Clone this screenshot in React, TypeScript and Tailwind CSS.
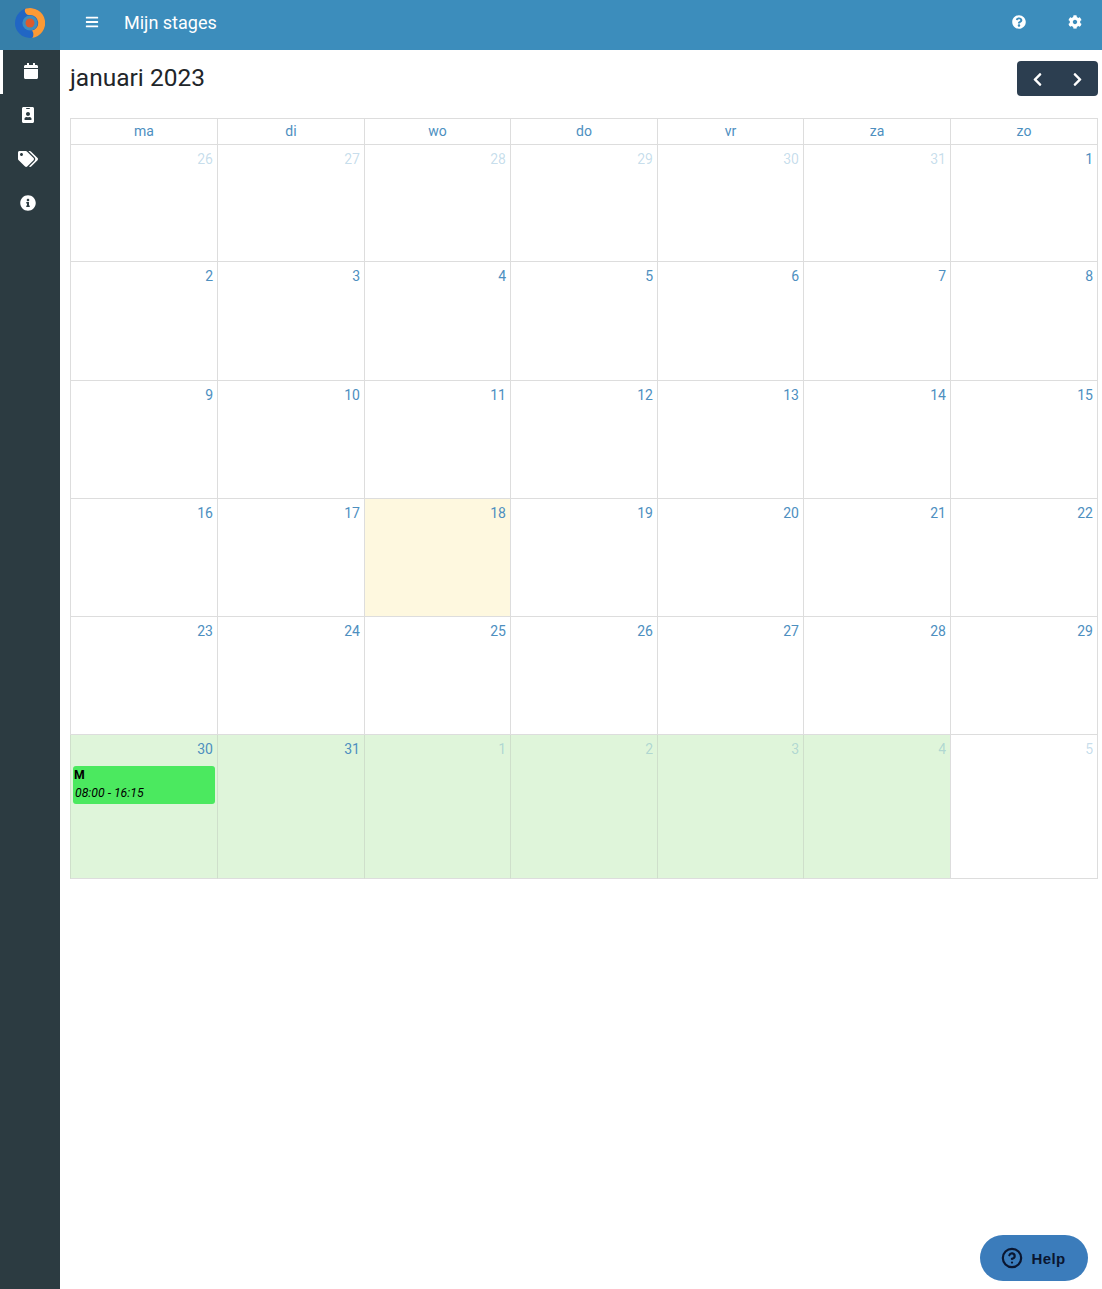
import { FaBars, FaCalendar, FaChevronLeft, FaChevronRight, FaCog, FaIdBadge, FaInfoCircle, FaQuestionCircle, FaTags } from "react-icons/fa";
import { CircleHelp } from "lucide-react";

type Day = { n: number; muted?: boolean; bg?: string; event?: boolean };

const d = (n: number, muted = false, bg = ""): Day => ({ n, muted, bg });
const green = "bg-[#dff5da]";

const weeks: { h: string; days: Day[] }[] = [
  { h: "h-[117px]", days: [d(26, true), d(27, true), d(28, true), d(29, true), d(30, true), d(31, true), d(1)] },
  { h: "h-[119px]", days: [2, 3, 4, 5, 6, 7, 8].map((n) => d(n)) },
  { h: "h-[118px]", days: [9, 10, 11, 12, 13, 14, 15].map((n) => d(n)) },
  { h: "h-[118px]", days: [d(16), d(17), d(18, false, "bg-[#fef8df]"), d(19), d(20), d(21), d(22)] },
  { h: "h-[118px]", days: [23, 24, 25, 26, 27, 28, 29].map((n) => d(n)) },
  {
    h: "h-[144px]",
    days: [
      { n: 30, bg: green, event: true },
      d(31, false, green),
      d(1, true, green),
      d(2, true, green),
      d(3, true, green),
      d(4, true, green),
      d(5, true),
    ],
  },
];

const names = ["ma", "di", "wo", "do", "vr", "za", "zo"];
const cols = "grid grid-cols-[147px_147px_146px_147px_146px_147px_147px]";

function Logo() {
  return (
    <svg width="30" height="30" viewBox="0 0 30 30">
      <circle cx="15" cy="15" r="15" fill="#2166c4" />
      <path d="M11 .6A15 15 0 1 1 17 29.900C19 29 18.800 22.900 16.500 22.800A7.900 7.900 0 0 0 15 7.100C10 7.400 8.500 1.300 11 .6z" fill="#fb9a35" />
      <circle cx="15" cy="15" r="7.600" fill="#3d8dbd" />
      <circle cx="15" cy="15" r="4.500" fill="#dc5a2c" />
    </svg>
  );
}

export default function App() {
  return (
    <div className="flex min-h-[1289px] font-['Roboto',sans-serif] bg-white">
      <aside className="w-[60px] shrink-0 bg-[#2c3b41] flex flex-col">
        <div className="h-[50px] bg-[#367fa9] flex items-center justify-center pb-[4px]">
          <Logo />
        </div>
        <div className="h-[44px] border-l-[3px] border-white flex items-center justify-center text-white pr-[1px] pb-[2px]">
          <FaCalendar size={16} />
        </div>
        <div className="h-[44px] flex items-center justify-center text-white pr-[4px] pb-[2px]">
          <FaIdBadge size={16} />
        </div>
        <div className="h-[44px] flex items-center justify-center text-white pr-[4px] pb-[3px]">
          <FaTags size={20} />
        </div>
        <div className="h-[44px] flex items-center justify-center text-white pr-[4px] pb-[2px]">
          <FaInfoCircle size={16} />
        </div>
      </aside>
      <main className="flex-1 min-w-0">
        <header className="h-[50px] bg-[#3c8dbc] flex items-center text-white pb-[6px]">
          <FaBars size={14} className="ml-[25px]" />
          <span className="ml-[25px] text-[18px]">Mijn stages</span>
          <FaQuestionCircle size={14} className="ml-auto" />
          <FaCog size={14} className="ml-[42px] mr-[20px]" />
        </header>
        <div className="pl-[10px] pr-[4px]">
          <div className="h-[68px] flex items-start justify-between">
            <h2 className="mt-[12px] text-[24.5px] leading-[32px] text-[#212529]">januari 2023</h2>
            <div className="mt-[11px] h-[35px] w-[81px] bg-[#2c3e50] rounded-[4px] flex items-center justify-between px-[13px] pt-[1px] text-white">
              <FaChevronLeft size={15} />
              <FaChevronRight size={15} />
            </div>
          </div>
          <div className="w-[1028px] border-r border-[#dddddd]">
            <div className={`${cols} h-[27px] border-t border-[#dddddd]`}>
              {names.map((n) => (
                <div key={n} className="border-l border-b border-[#dddddd] flex items-center justify-center pb-[1px] text-[14px] text-[#4d8fbf]">
                  {n}
                </div>
              ))}
            </div>
            {weeks.map((w, i) => (
              <div key={i} className={`${cols} ${w.h}`}>
                {w.days.map((day, j) => (
                  <div
                    key={j}
                    className={`${day.bg} border-l border-b ${day.bg === green ? "border-l-[#cfdfcb]" : "border-l-[#dddddd]"} border-b-[#dddddd] pt-[6px] px-[2px]`}
                  >
                    <div className={`text-right pr-[2px] text-[14px] leading-[16px] ${day.muted ? "text-[#3c8dbc]/30" : "text-[#4d8fbf]"}`}>{day.n}</div>
                    {day.event && (
                      <div className="mt-[9px] h-[38px] bg-[#4be95f] rounded-[3px] pl-[2px] pt-[1px] text-black text-[12.25px] leading-[17px]">
                        <div className="font-bold -ml-[1px]">M</div>
                        <div className="italic mt-[1px]">08:00 - 16:15</div>
                      </div>
                    )}
                  </div>
                ))}
              </div>
            ))}
          </div>
        </div>
      </main>
      <div className="fixed right-[14px] bottom-[8px] w-[108px] h-[46px] rounded-full bg-[#3b7cbb] flex items-center justify-center gap-[8px] pr-[1px] text-[#0a1630] font-['Liberation_Sans',sans-serif] font-bold text-[15px] tracking-[0.4px]">
        <CircleHelp size={22} strokeWidth={2.4} />
        <span className="pt-[2px]">Help</span>
      </div>
    </div>
  );
}
